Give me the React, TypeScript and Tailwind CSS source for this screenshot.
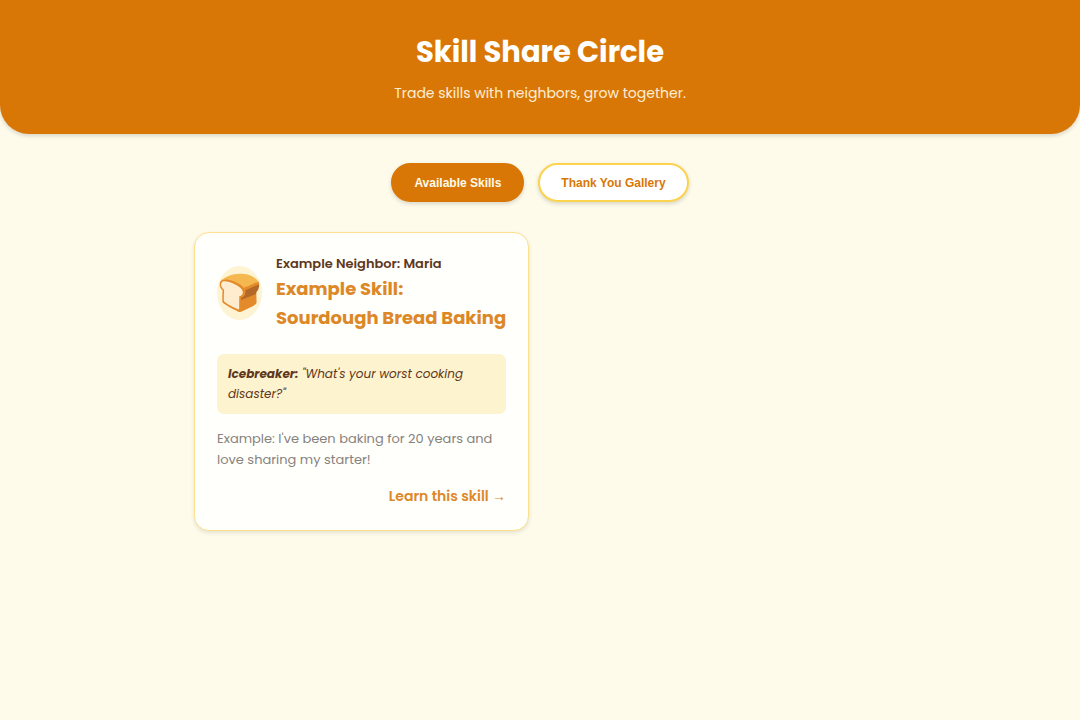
import { useState } from 'react'

const tabs = ['Available Skills', 'Thank You Gallery']

function SkillCard() {
  return (
    <article className="bg-[#fffffc] border border-[#fde08c] rounded-[15px] px-[22px] pt-[21px] pb-[22px] shadow-[0_2px_4px_rgba(0,0,0,0.1)]">
      <div className="flex items-center gap-[14px] mb-[22px]">
        <span className="shrink-0 rounded-[50%] bg-[#fef3cf] text-[36px] leading-[54px] opacity-90">🍞</span>
        <div>
          <p className="text-[13px] leading-5 font-semibold text-[#5f3820]">Example Neighbor: Maria</p>
          <h2 className="text-[18px] leading-[29px] font-bold text-[#dd8827]">
            Example Skill:<br />
            <span className="whitespace-nowrap">Sourdough Bread Baking</span>
          </h2>
        </div>
      </div>

      <p className="bg-[#fef3cf] rounded-[7px] px-[11px] py-[10px] text-[12px] leading-5 italic text-[#5f3820]">
        <strong>Icebreaker:</strong> "What's your worst cooking disaster?"
      </p>

      <p className="mt-[14px] text-[13px] leading-[21px] text-[#88827c]">
        Example: I've been baking for 20 years and love sharing my starter!
      </p>

      <div className="mt-[14px] text-right">
        <a href="#learn" className="block text-[14px] leading-6 font-semibold text-[#dd8827]">
          Learn this skill <span className="font-['Liberation_Sans',sans-serif]">→</span>
        </a>
      </div>
    </article>
  )
}

export default function App() {
  const [active, setActive] = useState(tabs[0])

  return (
    <div className="min-h-screen bg-[#fffbeb] font-['Poppins','Inter',sans-serif]">
      <header className="bg-[#d97706] rounded-b-[29px] py-[29px] text-center shadow-[0_2px_4px_rgba(0,0,0,0.15)]">
        <h1 className="text-[29px] leading-[46px] font-bold text-white">Skill Share Circle</h1>
        <p className="mt-[7px] text-[14px] leading-[23px] text-[#fdeed5]">
          Trade skills with neighbors, grow together.
        </p>
      </header>

      <nav className="flex justify-center gap-[14px] mt-[29px] mb-[30px]">
        {tabs.map((tab) => (
          <button
            key={tab}
            type="button"
            onClick={() => setActive(tab)}
            className={`h-[39px] px-[21px] rounded-full border-2 font-['Liberation_Sans',sans-serif] text-[12px] font-bold shadow-[0_2px_4px_rgba(0,0,0,0.15)] ${
              active === tab
                ? 'bg-[#d97706] border-[#d97706] text-[#fffbeb]'
                : 'bg-white border-[#fcd34d] text-[#d97706]'
            }`}
          >
            {tab}
          </button>
        ))}
      </nav>

      <main className="max-w-[692px] mx-auto grid grid-cols-2 items-start gap-[22px]">
        <SkillCard />
      </main>
    </div>
  )
}
